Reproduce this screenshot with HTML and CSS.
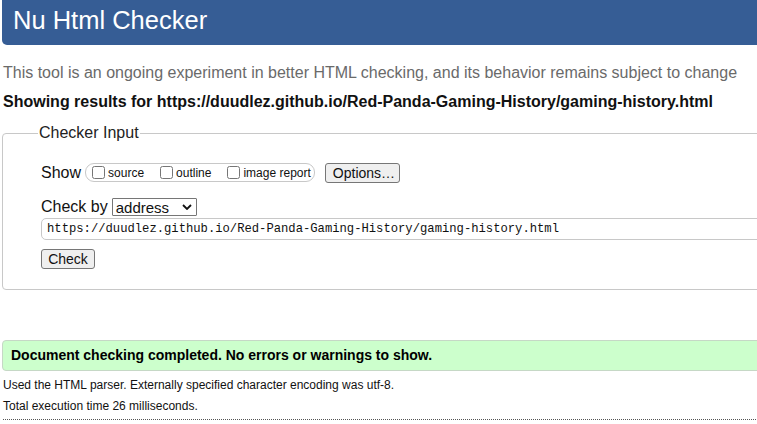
FILE: index.html
```html
<!DOCTYPE html>
<html lang="en">
<head>
<meta charset="utf-8">
<title>Nu Html Checker</title>
<link rel="stylesheet" href="styles.css">
</head>
<body>
<div class="page">
  <h1 class="header">Nu Html Checker</h1>
  <p class="intro">This tool is an ongoing experiment in better HTML checking, and its behavior remains subject to change</p>
  <p class="results">Showing results for https://duudlez.github.io/Red-Panda-Gaming-History/gaming-history.html</p>
  <fieldset class="checker">
    <legend class="legend">Checker Input</legend>
    <div class="row show-row">
      <span class="label">Show</span>
      <span class="opts">
        <label class="opt"><input type="checkbox" class="cb"><span>source</span></label>
        <label class="opt"><input type="checkbox" class="cb"><span>outline</span></label>
        <label class="opt"><input type="checkbox" class="cb"><span>image report</span></label>
      </span>
      <button class="btn options">Options…</button>
    </div>
    <div class="row by-row">
      <span class="label">Check by</span>
      <span class="select">address<svg class="chev" viewBox="0 0 10 6" width="10" height="6"><path d="M1 1 L5 5 L9 1" fill="none" stroke="#111" stroke-width="1.8"/></svg></span>
    </div>
    <div class="url">https://duudlez.github.io/Red-Panda-Gaming-History/gaming-history.html</div>
    <button class="btn check">Check</button>
  </fieldset>
  <div class="success">Document checking completed. No errors or warnings to show.</div>
  <p class="meta">Used the HTML parser. Externally specified character encoding was utf-8.</p>
  <p class="meta">Total execution time 26 milliseconds.</p>
  <div class="dots"></div>
</div>
</body>
</html>
```
FILE: styles.css
```css
html, body {
  margin: 0;
  padding: 0;
  overflow: hidden;
  background: #fff;
}
body {
  font-family: "Liberation Sans", Arial, sans-serif;
  color: #111;
}
.page {
  width: 1100px;
  padding-left: 2px;
}
.header {
  margin: 0;
  height: 45px;
  box-sizing: border-box;
  background: #365d95;
  color: #fff;
  font-weight: normal;
  font-size: 25.5px;
  line-height: 40px;
  padding: 0 0 0 11px;
  border-radius: 0 0 0 5px;
}
.intro {
  margin: 18px 0 0 1px;
  font-size: 16px;
  line-height: 20px;
  color: #6a6a6a;
}
.results {
  margin: 9px 0 0 1px;
  font-size: 16px;
  line-height: 20px;
  font-weight: bold;
  color: #111;
}
.checker {
  margin: 12px 0 0 0;
  border: 1px solid #c8c8c8;
  border-radius: 4px;
  padding: 8px 38px 20px 38px;
  height: 166px;
  box-sizing: border-box;
}
.legend {
  font-size: 16px;
  padding: 0 1px;
  margin-left: -3px;
  color: #222;
  line-height: 18px;
}
.row {
  display: flex;
  align-items: center;
}
.show-row {
  margin-top: 12px;
  height: 21px;
}
.label {
  font-size: 16px;
  color: #111;
}
.opts {
  display: flex;
  align-items: center;
  margin-left: 4px;
  height: 19px;
  box-sizing: border-box;
  border: 1px solid #c8c8c8;
  border-radius: 9px;
  padding: 0 3px 0 4px;
  gap: 14px;
}
.opt {
  display: flex;
  align-items: center;
  font-size: 12px;
  color: #111;
}
.cb {
  width: 13px;
  height: 13px;
  margin: 0 3px 0 2px;
}
.btn {
  font-family: "Liberation Sans", Arial, sans-serif;
  font-size: 14px;
  color: #111;
  background: #efefef;
  border: 1px solid #767676;
  border-radius: 3px;
  padding: 0 7px;
  height: 20px;
  line-height: 18px;
}
.options {
  margin-left: 10px;
  width: 75px;
}
.by-row {
  margin-top: 14px;
  height: 20px;
}
.select {
  display: flex;
  align-items: center;
  justify-content: space-between;
  margin-left: 4px;
  width: 85px;
  height: 18px;
  box-sizing: border-box;
  border: 1px solid #767676;
  border-radius: 1px;
  padding: 0 4px 0 3px;
  font-size: 15px;
  color: #111;
}
.chev {
  display: block;
}
.url {
  margin-top: 1px;
  width: 760px;
  margin-right: -60px;
  height: 22px;
  box-sizing: border-box;
  border: 1px solid #c8c8c8;
  border-radius: 5px 0 0 5px;
  padding: 0 0 0 5px;
  font-family: "Liberation Mono", "DejaVu Sans Mono", monospace;
  font-size: 12.2px;
  line-height: 20px;
  color: #111;
}
.check {
  margin-top: 9px;
  width: 54px;
  padding: 0;
}
.success {
  margin-top: 50px;
  height: 31px;
  box-sizing: border-box;
  background: #ccffcc;
  border: 1px solid #c6d8c6;
  border-radius: 4px;
  padding: 0 0 0 8px;
  font-weight: bold;
  font-size: 14px;
  line-height: 29px;
  color: #000;
}
.meta {
  margin: 6px 0 0 1px;
  font-size: 12px;
  line-height: 16px;
  color: #111;
}
.meta + .meta {
  margin-top: 5px;
}
.dots {
  margin-top: 5px;
  margin-left: 1px;
  border-top: 1px dotted #555;
  height: 0;
}
```
